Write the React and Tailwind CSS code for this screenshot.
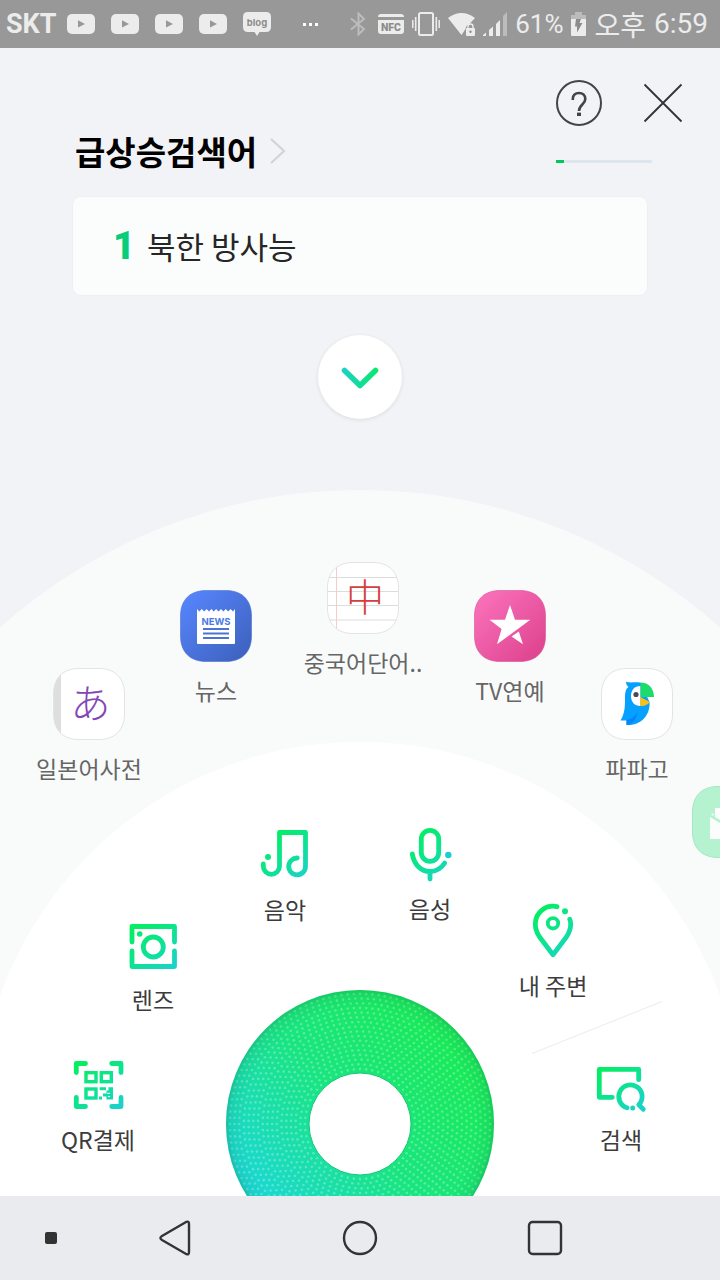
const SQUIRCLE = "M26 .5 H46 C62 .5 71.5 10 71.5 26 V46 C71.5 62 62 71.5 46 71.5 H26 C10 71.5 .5 62 .5 46 V26 C.5 10 10 .5 26 .5 Z"

const cjk = "font-['Noto_Sans_CJK_KR',sans-serif]"

/* Status bar icons */
const VideoIcon = () => (
    <svg width="28" height="20" viewBox="0 0 28 20">
        <rect width="28" height="20" rx="5" fill="#ececec" />
        <path d="M11 6.300 L18 10 L11 13.500 Z" fill="#989898" />
    </svg>
)

const BlogIcon = () => (
    <svg width="28" height="24" viewBox="0 0 28 24">
        <path d="M5 0 H23 Q28 0 28 5 V15 Q28 20 23 20 H16.500 L14 24 L11.500 20 H5 Q0 20 0 15 V5 Q0 0 5 0 Z" fill="#ececec" />
        <text x="14" y="13.500" textAnchor="middle" fontSize="9.500" fontWeight="700" fill="#8c8c8c" fontFamily="Inter, sans-serif">blog</text>
    </svg>
)

const BluetoothIcon = () => (
    <svg width="16" height="24" viewBox="0 0 16 24" fill="none" stroke="#bcbcbc" strokeWidth="2">
        <path d="M1 6.500 L14 17 L8.500 22.500 V1.500 L14 7 L1 17.500" />
    </svg>
)

const NfcIcon = () => (
    <svg width="26" height="20" viewBox="0 0 26 20">
        <path d="M3 0 H23 Q26 0 26 3 H0 Q0 0 3 0 Z M0 6 H26 V17 Q26 20 23 20 H3 Q0 20 0 17 Z" fill="#ececec" />
        <text x="13" y="17" textAnchor="middle" fontSize="10.500" fontWeight="900" fill="#8c8c8c" fontFamily="Roboto, sans-serif">NFC</text>
    </svg>
)

const VibrateIcon = () => (
    <svg width="28" height="24" viewBox="0 0 28 24" fill="none" stroke="#ececec">
        <rect x="7" y="1" width="14" height="22" rx="1.500" strokeWidth="2" />
        <path d="M3.700 5 V19 M24.300 5 V19" strokeWidth="1.600" />
        <path d="M.8 8 V16 M27.200 8 V16" strokeWidth="1.500" />
    </svg>
)

const WifiIcon = () => (
    <svg width="27" height="23" viewBox="0 0 27 23">
        <path d="M0 5 Q13.500 -5 27 5 L21 11.500 Q18 12 17.500 16 L13.500 22 Z" fill="#ececec" />
        <rect x="18" y="15" width="9" height="8" rx="1" fill="#ececec" />
        <path d="M20 15 V13.500 a2.500 2.500 0 0 1 5 0 V15" fill="none" stroke="#ececec" strokeWidth="1.400" />
        <circle cx="22.500" cy="18.700" r="1.200" fill="#8f8f8f" />
    </svg>
)

const SignalIcon = () => (
    <svg width="24" height="24" viewBox="0 0 24 24">
        <path d="M0 24 V23 L3 20.500 V24 Z M6 24 V18 L10 14.500 V24 Z M13 24 V12 L17 8 V24 Z" fill="#ececec" />
        <path d="M20 24 V4 L24 0 V24 Z" fill="#bcbcbc" />
    </svg>
)

const BatteryIcon = () => (
    <svg width="15" height="24" viewBox="0 0 15 24">
        <path d="M4 0 H11 V3 H15 V7 H0 V3 H4 Z" fill="#bcbcbc" />
        <path d="M0 7 H15 V23 Q15 24 14 24 H1 Q0 24 0 23 Z" fill="#ececec" />
        <path d="M5 7 H10 L8.500 11 H11.500 L6 20.500 V14.500 H4 Z" fill="#8c8c8c" />
    </svg>
)

/* App icons on the outer ring */
const JapaneseIcon = () => (
    <svg width="72" height="72" viewBox="0 0 72 72">
        <clipPath id="jp-clip"><path d={SQUIRCLE} /></clipPath>
        <g clipPath="url(#jp-clip)">
            <rect width="72" height="72" fill="#fff" />
            <rect width="8" height="72" fill="#dedede" />
        </g>
        <path d={SQUIRCLE} fill="none" stroke="#e3e3e3" />
        <text x="37.500" y="50" textAnchor="middle" fontSize="40" fontWeight="300" fill="#8445b5" fontFamily="'Noto Sans CJK JP', sans-serif">あ</text>
    </svg>
)

const NewsIcon = () => (
    <svg width="72" height="72" viewBox="0 0 72 72">
        <linearGradient id="news-bg" x1="0" y1="0" x2="1" y2="1">
            <stop offset=".1" stopColor="#5583fa" />
            <stop offset="1" stopColor="#3c5fb9" />
        </linearGradient>
        <path d={SQUIRCLE} fill="url(#news-bg)" stroke="#4a70cf" strokeOpacity=".6" />
        <path d="M17 19 l2.400 2.500 2.400-2.500 2.400 2.500 2.400-2.500 2.400 2.500 2.400-2.500 2.400 2.500 2.400-2.500 2.400 2.500 2.400-2.500 2.400 2.500 2.400-2.500 2.400 2.500 2.400-2.500 2.400 2.500 2-2.500 V53 q0 1-1 1 H18 q-1 0-1-1 Z" fill="#fff" />
        <text x="36" y="35" textAnchor="middle" fontSize="9.500" fontWeight="700" fill="#4d78e3" fontFamily="Inter, sans-serif">NEWS</text>
        <path d="M23 39 H49 M23 43.500 H49 M23 48 H49" stroke="#4d74d3" strokeWidth="1.800" />
    </svg>
)

const ChineseIcon = () => (
    <svg width="72" height="72" viewBox="0 0 72 72">
        <clipPath id="cn-clip"><path d={SQUIRCLE} /></clipPath>
        <g clipPath="url(#cn-clip)">
            <rect width="72" height="72" fill="#fff" />
            <path d="M0 15.500 H72 M0 29.500 H72 M0 43.500 H72 M0 58 H72" stroke="#dcdcdc" />
            <path d="M9.500 0 V72" stroke="#f5cccc" />
        </g>
        <path d={SQUIRCLE} fill="none" stroke="#e3e3e3" />
        <text x="38" y="49" textAnchor="middle" fontSize="38" fontWeight="300" fill="#d44040" fontFamily="'Noto Sans CJK KR', sans-serif">中</text>
    </svg>
)

const TvIcon = () => (
    <svg width="72" height="72" viewBox="0 0 72 72">
        <linearGradient id="tv-bg" x1="0" y1="0" x2="1" y2="1">
            <stop offset=".1" stopColor="#f970b8" />
            <stop offset="1" stopColor="#dc3f8c" />
        </linearGradient>
        <path d={SQUIRCLE} fill="url(#tv-bg)" stroke="#d9508f" strokeOpacity=".6" />
        <path d="M36 15 L41 29.700 H56.300 L44.500 38.500 L23 54.300 L27.600 39 L15.500 29.700 H31 Z" fill="#fff" />
        <path d="M44.800 41.500 L49 54.300 L37.500 46.500 Z" fill="#fff" />
    </svg>
)

const PapagoIcon = () => (
    <svg width="72" height="72" viewBox="0 0 72 72">
        <path d={SQUIRCLE} fill="#fff" stroke="#e3e3e3" />
        <path d="M25 13.500 C27 15 32 14 39.500 14.500 L48.500 34 C49.500 46 41 58 25.500 57 V52.500 H19.500 C24 45 24 38 24 30 C24 25 24.500 21 27.500 19 C25.500 17.500 25 15.500 25 13.500 Z" fill="#06a1ff" />
        <path d="M25.500 57 V52 C31 51 34 48 36.500 44 C36 51 32 56 25.500 57 Z" fill="#0585fa" />
        <path d="M39.500 18 C33.500 18 30 22 30 28 C30 34 33.500 38 39.500 38 Z" fill="#fff" />
        <path d="M39.500 14.500 C47.500 14.500 53 20.500 53 29 H39.500 Z" fill="#1fdb6c" />
        <path d="M39.500 29 L48.700 34 C46.500 37 43.500 38.300 39.500 38 Z" fill="#fdc10d" />
        <circle cx="35" cy="26.500" r="2.600" fill="#474a5c" />
    </svg>
)

/* Line icons on the inner ring, all on a 56px grid */
const LineIcon = ({ name, children }) => (
    <svg width="56" height="56" viewBox="0 0 56 56" fill="none" stroke={`url(#mint-${name})`} strokeWidth="4.800" strokeLinecap="round" strokeLinejoin="round">
        <linearGradient id={`mint-${name}`} gradientUnits="userSpaceOnUse" x1="14" y1="8" x2="48" y2="50">
            <stop offset="0" stopColor="#04ee63" />
            <stop offset=".5" stopColor="#0de391" />
            <stop offset="1" stopColor="#1bd2ca" />
        </linearGradient>
        {children}
    </svg>
)

const dot = { stroke: "none" }

const MusicIcon = () => (
    <LineIcon name="music">
        <path d="M6.300 37 V39.200 A8.100 8.100 0 0 0 22.500 39.200 V5.500 H48.500 V39.200 A8.400 8.400 0 1 1 40.300 31" />
        <circle cx="11" cy="30" r="3" fill="url(#mint-music)" {...dot} />
    </LineIcon>
)

const VoiceIcon = () => (
    <LineIcon name="voice">
        <rect x="19.300" y="4.300" width="17.400" height="31" rx="8.700" />
        <path d="M10.300 28 C12 38.500 19 45.500 28 45.500 C34.500 45.500 39.500 42 42.700 37 M28 46 V53" />
        <circle cx="46.300" cy="29" r="3.200" fill="#1bcfd0" {...dot} />
    </LineIcon>
)

const NearbyIcon = () => (
    <LineIcon name="nearby">
        <path d="M32 3.700 A17.700 17.700 0 0 0 10.300 21 C10.300 26.500 12 30 14.600 34 L28 51.700 L41.400 34 C44 30 45.700 26.500 45.700 21 C45.700 19.400 45.400 17.800 44.800 16.300" />
        <circle cx="28" cy="20.300" r="5.200" strokeWidth="3.800" />
        <circle cx="40" cy="8.300" r="3" fill="url(#mint-nearby)" {...dot} />
    </LineIcon>
)

const LensIcon = () => (
    <LineIcon name="lens">
        <path d="M7 25 V9.500 H49.500 V25 M7 34 V49.500 H49.500 V34" />
        <circle cx="28.300" cy="30" r="10" />
        <circle cx="14.700" cy="17" r="2.800" fill="url(#mint-lens)" {...dot} />
    </LineIcon>
)

const QrIcon = () => (
    <LineIcon name="qr">
        <path d="M6.300 15.500 V6.500 H15.500 M41.700 6.500 H51 V15.500 M6.300 40.500 V49.500 H15.500 M41.700 49.500 H51 V40.500" />
        <g strokeWidth="3.400" strokeLinejoin="miter">
            <rect x="16" y="15.700" width="10" height="9" />
            <rect x="31.300" y="15.700" width="10" height="9" />
            <rect x="16" y="32" width="10" height="9" />
        </g>
        <path d="M29.700 30.300 H36 V33.300 H29.700 Z M38.500 30.300 H43 V42.500 H36.500 V39.500 H33 V36.500 H36.500 V33.500 H38.500 Z M29 39.500 H32 V42.500 H29 Z" fill="url(#mint-qr)" {...dot} />
        <path d="M37 36.300 h3 M40 39.500 h-2" stroke="#fff" strokeWidth="1" strokeLinecap="butt" />
    </LineIcon>
)

const SearchIcon = () => (
    <LineIcon name="search">
        <path d="M19.300 40.300 H6.300 V12.300 H45.700 V22.700" />
        <path d="M34 50.800 A11.700 11.700 0 1 1 45.800 47.800 L50.300 52.300" />
        <circle cx="39.700" cy="51" r="2.500" fill="url(#mint-search)" {...dot} />
    </LineIcon>
)

/* x is measured from the middle of the ring, y from its top */
const apps = [
    { label: "일본어사전", Icon: JapaneseIcon, x: -271, y: 178 },
    { label: "뉴스", Icon: NewsIcon, x: -144, y: 100 },
    { label: "중국어단어..", Icon: ChineseIcon, x: 3, y: 72 },
    { label: "TV연예", Icon: TvIcon, x: 150, y: 100 },
    { label: "파파고", Icon: PapagoIcon, x: 277, y: 178 },
]

const tools = [
    { label: "QR결제", Icon: QrIcon, x: -262, y: 567 },
    { label: "렌즈", Icon: LensIcon, x: -207, y: 427 },
    { label: "음악", Icon: MusicIcon, x: -75, y: 337 },
    { label: "음성", Icon: VoiceIcon, x: 70, y: 336 },
    { label: "내 주변", Icon: NearbyIcon, x: 193, y: 413 },
    { label: "검색", Icon: SearchIcon, x: 261, y: 567 },
]

function RingItem({ item, tone }) {
    const { label, Icon, x, y } = item

    return (
        <li className="absolute w-36 -translate-x-1/2" style={{ left: `calc(50% + ${x}px)`, top: y }}>
            <button className={`flex w-full flex-col items-center text-[23px] leading-8 whitespace-nowrap ${tone}`}>
                <Icon />
                {label}
            </button>
        </li>
    )
}

const wheelDots = []
for (let ring = 0; ring < 17; ring++) {
    const r = 55 + ring * 4.7
    const count = Math.round((2 * Math.PI * r) / 6.2)
    for (let i = 0; i < count; i++) {
        const a = ((i + (ring % 2) / 2) / count) * 2 * Math.PI
        wheelDots.push({ x: 134 + r * Math.cos(a), y: 134 + r * Math.sin(a) })
    }
}

function Wheel() {
    return (
        <svg width="268" height="268" viewBox="0 0 268 268">
            <linearGradient id="wheel-fill" x1=".85" y1=".2" x2=".12" y2=".78">
                <stop offset="0" stopColor="#19ea57" />
                <stop offset=".5" stopColor="#19e580" />
                <stop offset="1" stopColor="#1bd8d4" />
            </linearGradient>
            <radialGradient id="wheel-edge">
                <stop offset=".86" stopColor="#0b7a50" stopOpacity="0" />
                <stop offset=".96" stopColor="#0b7a50" stopOpacity=".1" />
                <stop offset="1" stopColor="#0b7a50" stopOpacity=".28" />
            </radialGradient>
            <circle cx="134" cy="134" r="134" fill="url(#wheel-fill)" />
            <g fill="#fff" fillOpacity=".27">
                {wheelDots.map((d, i) => <circle key={i} cx={d.x} cy={d.y} r="1.300" />)}
            </g>
            <circle cx="134" cy="134" r="134" fill="url(#wheel-edge)" />
            <circle cx="134" cy="134" r="51" fill="#fff" stroke="#12c878" strokeWidth="1" />
        </svg>
    )
}

function StatusBar() {
    return (
        <div className="flex h-12 shrink-0 items-center justify-between bg-[#989898] pr-3 pl-1.5 font-[Roboto,sans-serif] text-[#ececec]">
            <div className="flex items-center gap-4">
                <span className="-mr-1.5 text-[27px] font-bold">SKT</span>
                <VideoIcon />
                <VideoIcon />
                <VideoIcon />
                <VideoIcon />
                <BlogIcon />
                <span className="ml-4 flex gap-[3px]">
                    <i className="size-[3px] bg-white" />
                    <i className="size-[3px] bg-white" />
                    <i className="size-[3px] bg-white" />
                </span>
            </div>
            <div className="flex items-center gap-2">
                <BluetoothIcon />
                <span className="ml-1 flex items-center gap-2">
                    <NfcIcon />
                    <VibrateIcon />
                </span>
                <WifiIcon />
                <SignalIcon />
                <span className="text-[26px]">61%</span>
                <BatteryIcon />
                <span className={`text-[28px] leading-8 ${cjk}`}>오후</span>
                <span className="text-[28px]">6:59</span>
            </div>
        </div>
    )
}

function Header() {
    return (
        <header className="flex items-end justify-between pt-8 pr-9 pl-[75px]">
            <a href="#trend" className="flex items-center gap-3 text-black">
                <h1 className="text-[33px] leading-9 font-bold">급상승검색어</h1>
                <svg width="20" height="28" viewBox="0 0 20 28" fill="none" stroke="#d0d3d9" strokeWidth="2.200">
                    <path d="M2 2 L15 14 L2 26" />
                </svg>
            </a>
            <div className="flex flex-col gap-[34px] pb-1.5">
                <div className="flex items-center gap-10">
                    <button aria-label="도움말">
                        <svg width="46" height="46" viewBox="0 0 46 46" fill="none" stroke="#444" strokeWidth="2">
                            <circle cx="23" cy="23" r="22" />
                            <path d="M16.800 20 V19 C16.800 15.200 19.500 13 23 13 C26.500 13 29.300 15.200 29.300 19 C29.300 24.500 23 24.500 23 31" strokeWidth="2.600" />
                            <path d="M21 34.300 H25" strokeWidth="3.400" />
                        </svg>
                    </button>
                    <button aria-label="닫기">
                        <svg width="42" height="42" viewBox="0 0 42 42" stroke="#333" strokeWidth="1.800">
                            <path d="M2.500 2.500 L39.500 39.500 M39.500 2.500 L2.500 39.500" />
                        </svg>
                    </button>
                </div>
                <div className="h-[3px] w-24 bg-[#dde6ef]">
                    <div className="h-full w-2 bg-[#03c75a]" />
                </div>
            </div>
        </header>
    )
}

function Launcher() {
    return (
        <section className="relative min-h-[706px] flex-1 overflow-hidden">
            {/* Rings */}
            <div className="absolute top-0 left-1/2 size-[1078px] -translate-x-1/2 rounded-full bg-[#f9fbfb]" />
            <div className="absolute top-[252px] left-1/2 size-[764px] -translate-x-1/2 rounded-full bg-white" />
            <svg className="absolute top-[511px] left-1/2 ml-[172px]" width="131" height="53" viewBox="0 0 131 53">
                <path d="M0 52.500 L130 .5" stroke="#ececec" />
            </svg>

            <ul>
                {apps.map(item => <RingItem key={item.label} item={item} tone="gap-3 text-[#666]" />)}
            </ul>
            <ul>
                {tools.map(item => <RingItem key={item.label} item={item} tone="gap-2.5 text-[#3c3c3c]" />)}
            </ul>

            <button aria-label="그린닷" className="absolute top-[500px] left-1/2 -translate-x-1/2">
                <Wheel />
            </button>

            {/* Next app, half off the edge */}
            <button aria-label="메일" className="absolute top-[296px] -right-11">
                <svg width="72" height="72" viewBox="0 0 72 72">
                    <path d={SQUIRCLE} fill="#b4f2d0" stroke="#a6e8c3" />
                    <path d="M18 31 L36 42 L54 31 V53 H18 Z M23 22 H49 V31 L36 39 L23 31 Z M19 28.500 L21.500 27 V30 Z" fill="#fafdfb" />
                </svg>
            </button>
        </section>
    )
}

function NavBar() {
    return (
        <nav className="grid h-21 shrink-0 grid-cols-[82px_1fr_1fr_1fr_82px] items-center justify-items-center bg-[#e9ebee]">
            <button aria-label="고정" className="ml-5 size-3 rounded-xs bg-[#333]" />
            <button aria-label="뒤로">
                <svg width="36" height="36" viewBox="0 0 36 36" fill="none" stroke="#333" strokeWidth="2.400">
                    <path d="M29.500 1.800 L5 16 Q1.800 18 5 20 L29.500 34.200 Q32 35 32 32 V4 Q32 1 29.500 1.800 Z" />
                </svg>
            </button>
            <button aria-label="홈">
                <svg width="36" height="36" viewBox="0 0 36 36" fill="none" stroke="#333" strokeWidth="2.400">
                    <circle cx="18" cy="18" r="16" />
                </svg>
            </button>
            <button aria-label="최근 앱">
                <svg width="36" height="36" viewBox="0 0 36 36" fill="none" stroke="#333" strokeWidth="2.400">
                    <rect x="2" y="2" width="32" height="32" rx="3.500" />
                </svg>
            </button>
        </nav>
    )
}

export default function App() {
    return (
        <div className={`flex min-h-screen flex-col bg-[#f2f3f6] ${cjk}`}>
            <StatusBar />
            <main className="flex flex-1 flex-col">
                <Header />
                <a href="#rank-1" className="mx-[73px] mt-7 flex h-[98px] items-center gap-3 rounded-lg bg-[#fbfdfc] px-10 shadow-[0_0_1px_1px_#edeff2]">
                    <strong className="font-[Roboto,sans-serif] text-[38px] leading-10 font-black text-[#06cd7b]">1</strong>
                    <span className="text-[31px] leading-10 text-[#262626]">북한 방사능</span>
                </a>
                <button aria-label="펼치기" className="mx-auto mt-10 mb-[71px] flex size-21 items-center justify-center rounded-full bg-white shadow-[0_1px_4px_#00000018]">
                    <svg width="40" height="28" viewBox="0 0 40 28" fill="none" strokeWidth="5.500">
                        <linearGradient id="chevron" x1="0" y1="0" x2="1" y2="0">
                            <stop offset="0" stopColor="#1bd2c0" />
                            <stop offset="1" stopColor="#08e873" />
                        </linearGradient>
                        <path d="M4.500 7.500 L20 22.500 L35.500 7.500" stroke="url(#chevron)" strokeLinecap="round" strokeLinejoin="round" />
                    </svg>
                </button>
                <Launcher />
            </main>
            <NavBar />
        </div>
    )
}
